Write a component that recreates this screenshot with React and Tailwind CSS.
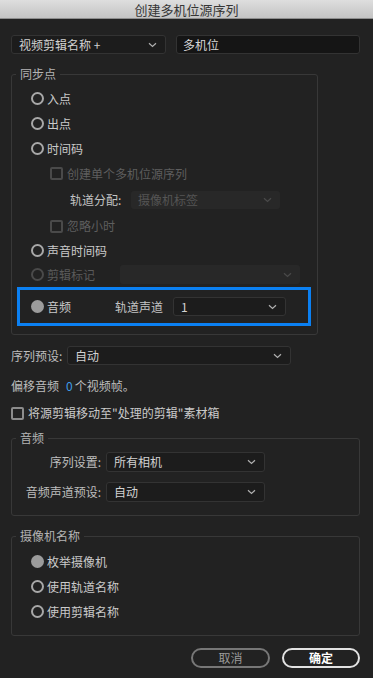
import React from 'react';

const Chevron = ({ dim }) => (
  <svg width="9" height="6" viewBox="0 0 9 6" fill="none">
    <path d="M1 1.2l3.5 3.3L8 1.2" stroke={dim ? '#4a4a4a' : '#b0b0b0'} strokeWidth="1.2" />
  </svg>
);

function Dropdown({ value, className = '', disabled }) {
  return (
    <div
      className={`flex items-center justify-between rounded-[3px] pl-[7px] pr-[8px] ${
        disabled ? 'bg-[#282828] text-[#555]' : 'bg-[#1c1c1c] border border-[#333] text-[#d2d2d2]'
      } ${className}`}
    >
      <span className="leading-none">{value}</span>
      <Chevron dim={disabled} />
    </div>
  );
}

function Radio({ label, checked, disabled, className = '' }) {
  return (
    <div className={`flex items-center ${className}`}>
      {checked ? (
        <span className="shrink-0 w-[13px] h-[13px] rounded-full bg-[#9c9c9c]" />
      ) : (
        <span
          className={`shrink-0 w-[13px] h-[13px] rounded-full border-2 ${
            disabled ? 'border-[#4a4a4a]' : 'border-[#a8a8a8]'
          }`}
        />
      )}
      <span className={`ml-[3px] ${disabled ? 'text-[#5a5a5a]' : 'text-[#cacaca]'}`}>{label}</span>
    </div>
  );
}

function Checkbox({ label, disabled, className = '' }) {
  return (
    <div className={`flex items-center ${className}`}>
      <span
        className={`shrink-0 w-[13px] h-[13px] rounded-[2px] border-2 ${
          disabled ? 'border-[#4a4a4a]' : 'border-[#8c8c8c]'
        }`}
      />
      <span className={`ml-[4px] ${disabled ? 'text-[#5e5e5e]' : 'text-[#cacaca]'}`}>{label}</span>
    </div>
  );
}

function Group({ title, className = '', children }) {
  return (
    <fieldset className={`border border-[#383838] rounded-[3px] ${className}`}>
      <legend className="ml-[4px] px-[4px] h-[16px] leading-[16px] text-[#b4b4b4]">{title}</legend>
      {children}
    </fieldset>
  );
}

export default function App() {
  return (
    <div className="w-[373px] h-[678px] bg-[#222222] text-[12px] font-['Noto_Sans_CJK_SC','Noto_Sans',sans-serif] overflow-hidden">
      {/* Title bar */}
      <div className="h-[19px] bg-gradient-to-b from-[#dedede] to-[#c4c4c4] border-b border-[#8e8e8e] flex items-center justify-center text-[13px] text-[#363636] leading-none">
        创建多机位源序列
      </div>

      <div className="pl-[11px] pr-[13px]">
        {/* Top row */}
        <div className="flex mt-[16px] h-[19px]">
          <Dropdown value="视频剪辑名称 +" className="w-[155px] h-[19px]" />
          <div className="ml-[10px] flex-1 h-[19px] bg-[#151515] border border-[#333] rounded-[3px] flex items-center pl-[6px] text-[#d8d8d8] leading-none">
            多机位
          </div>
        </div>

        {/* Sync point */}
        <Group title="同步点" className="mt-[12px] w-[307px] pt-[4px] pb-[8px]">
          <Radio label="入点" className="h-[25px] pl-[19px]" />
          <Radio label="出点" className="h-[25px] pl-[19px]" />
          <Radio label="时间码" className="h-[25px] pl-[19px]" />
          <Checkbox label="创建单个多机位源序列" disabled className="h-[25px] pl-[38px]" />
          <div className="h-[27px] flex items-center pl-[58px]">
            <span className="text-[#c4c4c4] w-[61px]">轨道分配:</span>
            <Dropdown value="摄像机标签" disabled className="w-[149px] h-[18px]" />
          </div>
          <Checkbox label="忽略小时" disabled className="h-[26px] pl-[38px]" />
          <Radio label="声音时间码" className="h-[23px] pl-[19px]" />
          <div className="h-[25px] flex items-center pl-[19px]">
            <Radio label="剪辑标记" disabled className="w-[89px]" />
            <Dropdown value="" disabled className="w-[180px] h-[19px]" />
          </div>
          <div className="ml-[5px] w-[294px] h-[39px] border-[3px] border-[#0b80f2] flex items-center pl-[11px]">
            <Radio label="音频" checked className="w-[84px]" />
            <span className="text-[#c4c4c4] w-[58px]">轨道声道</span>
            <Dropdown value="1" className="w-[113px] h-[19px]" />
          </div>
        </Group>

        {/* Sequence preset */}
        <div className="mt-[11px] h-[19px] flex items-center">
          <span className="text-[#bdbdbd] w-[56px]">序列预设:</span>
          <Dropdown value="自动" className="w-[224px] h-[19px]" />
        </div>

        <div className="mt-[11px] h-[20px] flex items-center text-[#bdbdbd]">
          <span>偏移音频</span>
          <span className="ml-[7px] text-[#3f9ce8]">0</span>
          <span className="ml-[2px]">个视频帧。</span>
        </div>

        <Checkbox label={'将源剪辑移动至"处理的剪辑"素材箱'} className="mt-[7px] h-[20px]" />

        {/* Audio */}
        <Group title="音频" className="mt-[7px] pt-[6px] pb-[13px]">
          <div className="flex items-center h-[20px]">
            <span className="w-[89px] text-right text-[#bdbdbd]">序列设置:</span>
            <Dropdown value="所有相机" className="ml-[5px] w-[159px] h-[20px]" />
          </div>
          <div className="flex items-center h-[20px] mt-[10px]">
            <span className="w-[89px] text-right text-[#bdbdbd]">音频声道预设:</span>
            <Dropdown value="自动" className="ml-[5px] w-[159px] h-[20px]" />
          </div>
        </Group>

        {/* Camera names */}
        <Group title="摄像机名称" className="mt-[12px] pt-[5px] pb-[11px]">
          <Radio label="枚举摄像机" checked className="h-[25px] pl-[19px]" />
          <Radio label="使用轨道名称" className="h-[25px] pl-[19px]" />
          <Radio label="使用剪辑名称" className="h-[25px] pl-[19px]" />
        </Group>

        {/* Buttons */}
        <div className="mt-[12px] flex justify-end">
          <button className="w-[79px] h-[20px] rounded-full border-2 border-[#777] text-[#9a9a9a] flex items-center justify-center leading-none">
            取消
          </button>
          <button className="ml-[12px] w-[78px] h-[20px] rounded-full border-2 border-[#e2e2e2] text-white font-bold flex items-center justify-center leading-none">
            确定
          </button>
        </div>
      </div>
    </div>
  );
}
